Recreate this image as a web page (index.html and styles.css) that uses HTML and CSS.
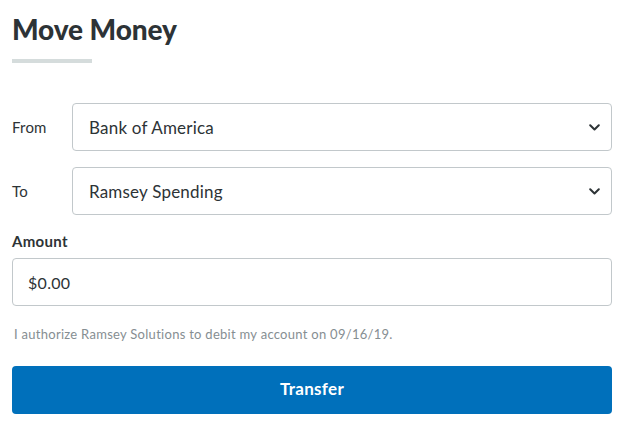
FILE: index.html
```html
<!DOCTYPE html>
<html>
<head>
<meta charset="utf-8">
<link rel="stylesheet" href="styles.css">
</head>
<body>
<div class="page">
  <h1 class="title">Move Money</h1>
  <div class="title-bar"></div>
  <div class="row row-from">
    <label class="row-label">From</label>
    <div class="select">
      <span class="select-text">Bank of America</span>
      <svg class="chev" width="11" height="7" viewBox="0 0 11 7"><path d="M1.2 1.2 L5.5 5.5 L9.8 1.2" fill="none" stroke="#2d3336" stroke-width="2" stroke-linecap="round" stroke-linejoin="round"/></svg>
    </div>
  </div>
  <div class="row row-to">
    <label class="row-label">To</label>
    <div class="select">
      <span class="select-text">Ramsey Spending</span>
      <svg class="chev" width="11" height="7" viewBox="0 0 11 7"><path d="M1.2 1.2 L5.5 5.5 L9.8 1.2" fill="none" stroke="#2d3336" stroke-width="2" stroke-linecap="round" stroke-linejoin="round"/></svg>
    </div>
  </div>
  <label class="amount-label">Amount</label>
  <div class="input"><span class="input-text">$0.00</span></div>
  <p class="auth">I authorize Ramsey Solutions to debit my account on 09/16/19.</p>
  <button class="btn">Transfer</button>
</div>
</body>
</html>
```
FILE: styles.css
```css
html, body {
  margin: 0;
  padding: 0;
  background: #fff;
}
body {
  font-family: "Lato", "Open Sans", sans-serif;
  color: #2d3336;
}
.page {
  width: 600px;
  padding: 13px 14px 0 12px;
}
.title {
  margin: 0;
  font-size: 28px;
  line-height: 33px;
  font-weight: 900;
  color: #2d3336;
  letter-spacing: -0.1px;
}
.title-bar {
  width: 80px;
  height: 4px;
  background: #d5dcdc;
  margin-top: 13px;
}
.row {
  display: flex;
  align-items: center;
}
.row-from { margin-top: 40px; }
.row-to { margin-top: 16px; }
.row-label {
  width: 60px;
  font-size: 15px;
  letter-spacing: 0.2px;
  color: #2d3336;
}
.select {
  flex: 1;
  height: 46px;
  border: 1px solid #c2c8cb;
  border-radius: 4px;
  display: flex;
  align-items: center;
  justify-content: space-between;
  padding: 0 11px 0 16px;
}
.select-text {
  font-size: 17px;
  letter-spacing: 0.2px;
  color: #2d3336;
}
.chev { display: block; }
.amount-label {
  display: block;
  margin-top: 18px;
  font-size: 15px;
  font-weight: 700;
  letter-spacing: 0.3px;
  line-height: 17px;
}
.input {
  margin-top: 8px;
  height: 46px;
  border: 1px solid #c2c8cb;
  border-radius: 4px;
  display: flex;
  align-items: center;
  padding: 0 15px;
}
.input-text {
  font-size: 16px;
  letter-spacing: 0.3px;
}
.auth {
  margin: 20px 0 0 2px;
  font-size: 13px;
  line-height: 16px;
  letter-spacing: 0.28px;
  color: #868e92;
}
.btn {
  display: block;
  margin-top: 24px;
  width: 600px;
  height: 48px;
  padding: 0 0 3px;
  border: 0;
  border-radius: 4px;
  background: #0070bb;
  color: #fff;
  font-family: "Lato", sans-serif;
  font-weight: 700;
  font-size: 17px;
  letter-spacing: 0.3px;
}
```
